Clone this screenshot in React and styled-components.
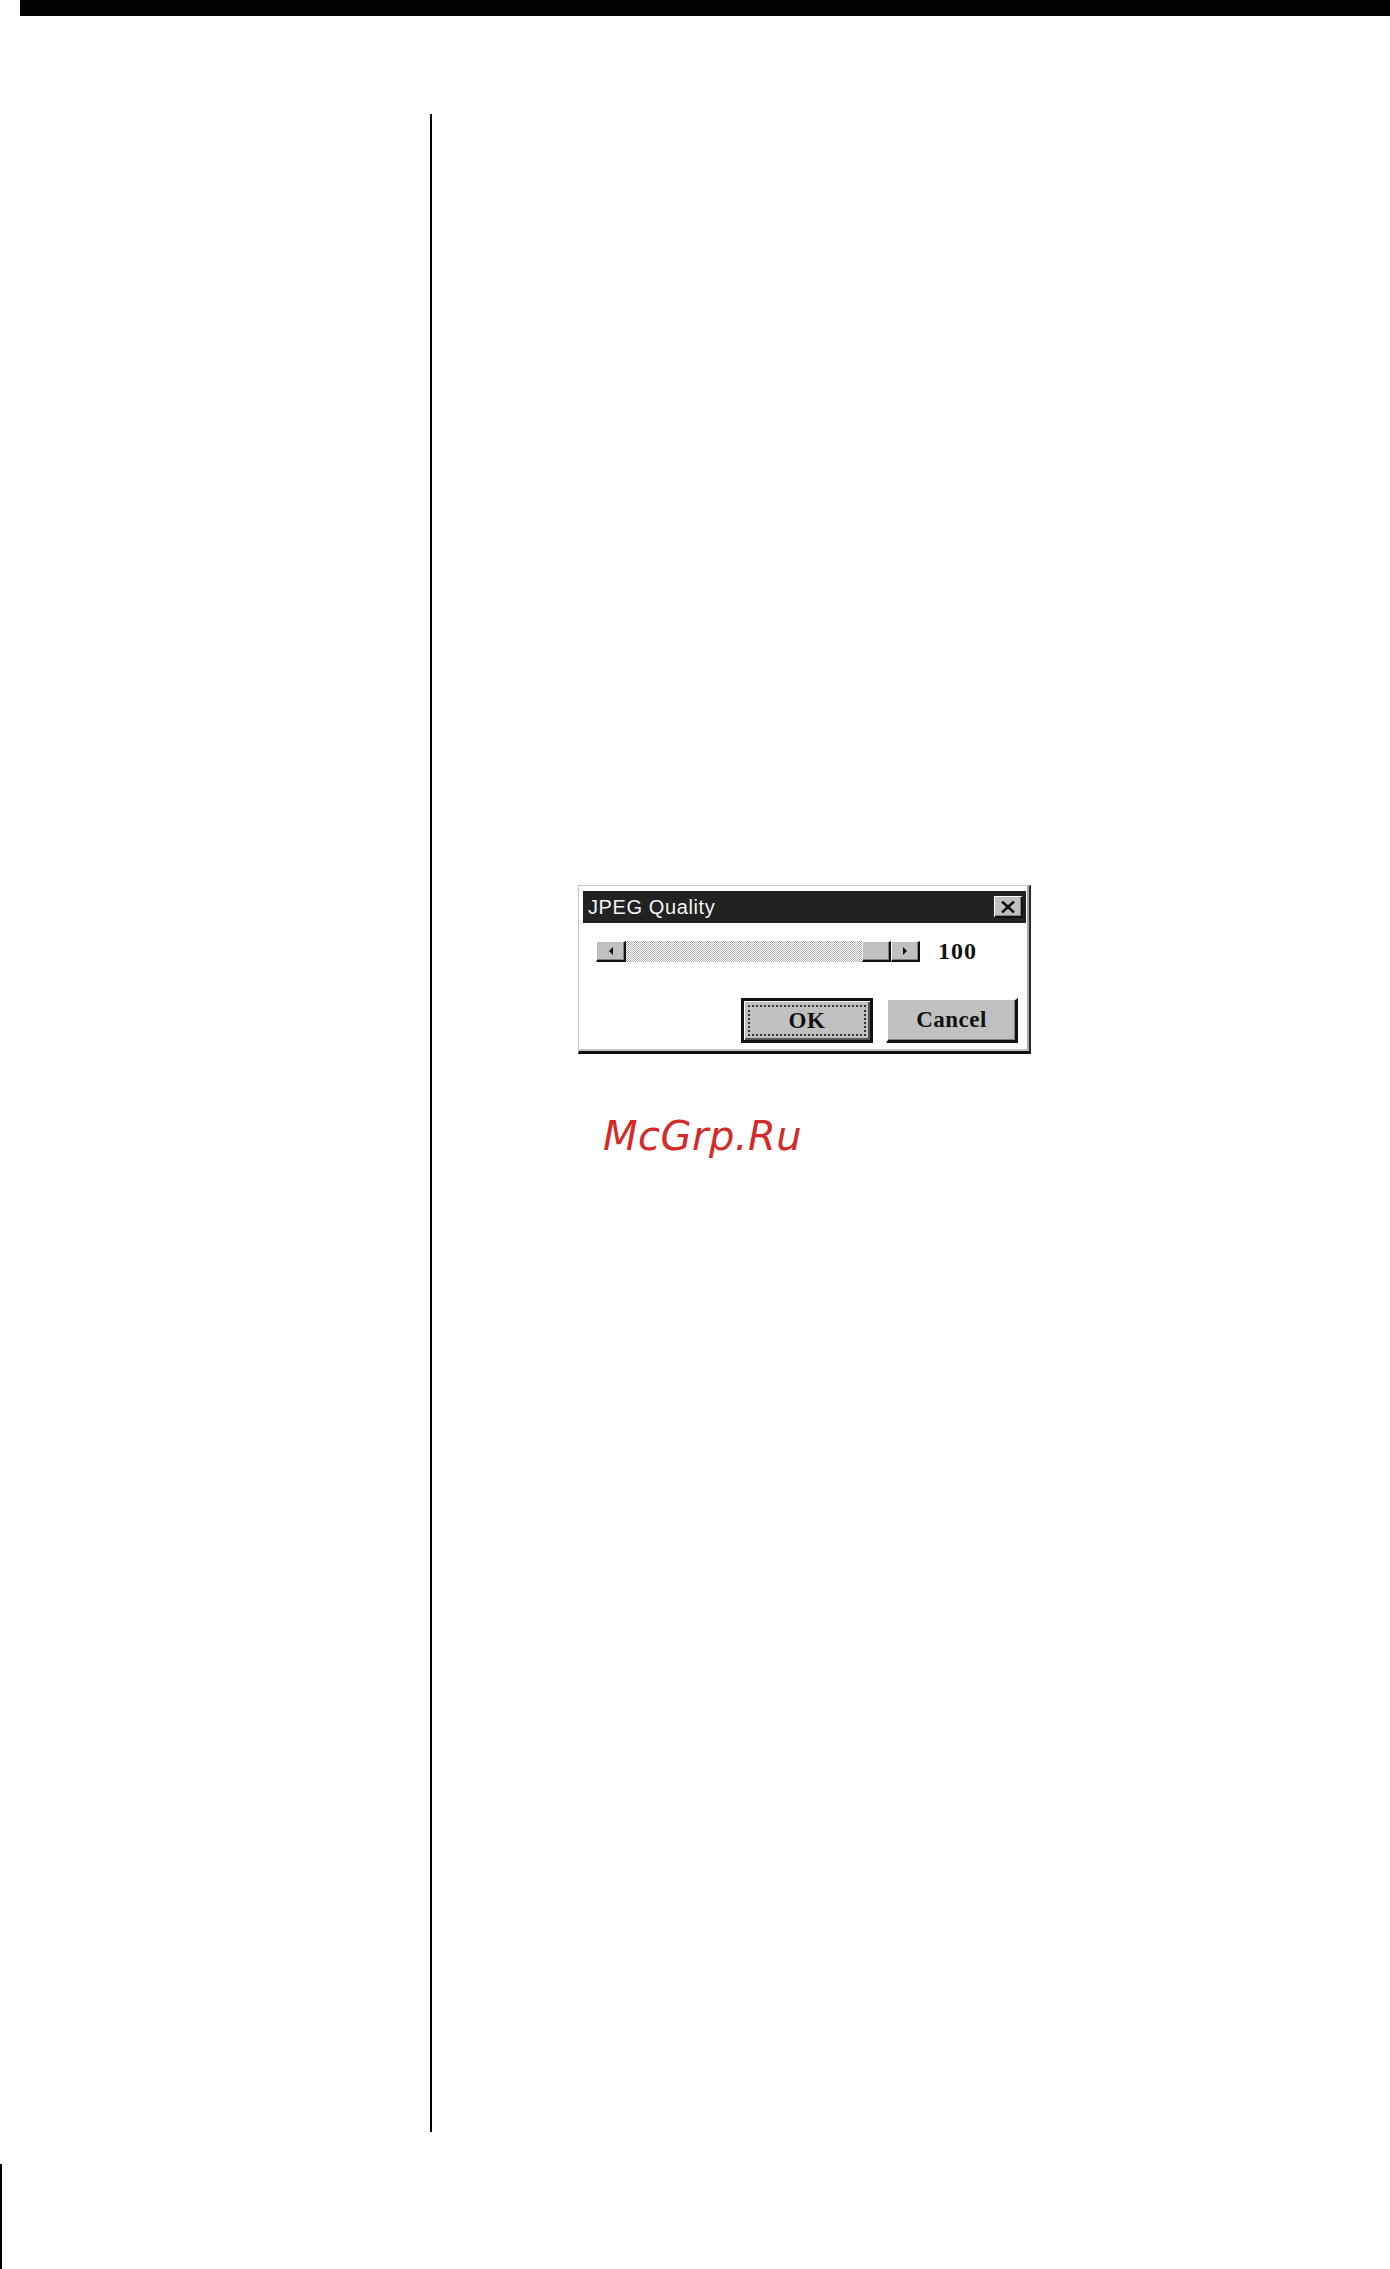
import React from "react"
import styled, { createGlobalStyle } from "styled-components"

const GlobalStyle = createGlobalStyle`
    html, body {
        margin: 0;
        padding: 0;
        background: #ffffff;
    }
    body {
        width: 1390px;
        height: 2269px;
        overflow: hidden;
        font-family: "Liberation Sans", Arial, sans-serif;
    }
`

const TopBar = styled.div`
    height: 16px;
    margin-left: 20px;
    background-color: #000;
`

const Main = styled.div`
    display: flex;
    margin-top: 98px;
`

const Sidebar = styled.div`
    width: 430px;
    height: 2018px;
    border-right: 2px solid #000;
    flex-shrink: 0;
`

const Content = styled.div`
    display: flex;
    flex-direction: column;
    align-items: flex-start;
    padding: 771px 0 0 146px;
`

const Footer = styled.div`
    margin-top: 32px;
    width: 2px;
    height: 105px;
    background-color: #000;
`

const Dialog = styled.div`
    width: 450px;
    background: #fff;
    border-top: 1px solid #c4c4c4;
    border-left: 1px solid #c4c4c4;
    border-right: 2px solid #2a2a2a;
    border-bottom: 3px solid #111;
`

const DialogInner = styled.div`
    padding: 5px 1px 2px 4px;
    border-right: 2px solid #a8a8a8;
    border-bottom: 2px solid #c0c0c0;
`

const TitleBar = styled.div`
    display: flex;
    align-items: center;
    justify-content: space-between;
    height: 32px;
    padding: 0 3px 0 5px;
    background-color: #222;
`

const Title = styled.span`
    color: #f4f4f4;
    font-family: "Liberation Sans", Arial, sans-serif;
    font-size: 20px;
    letter-spacing: 0.6px;
`

const bevel = `
    background-color: #c0c0c0;
    border-top: 1px solid #fff;
    border-left: 1px solid #fff;
    border-right: 2px solid #111;
    border-bottom: 2px solid #111;
    box-shadow: inset -1px -1px 0 #808080;
    box-sizing: border-box;
`

const CloseButton = styled.div`
    ${bevel}
    width: 29px;
    height: 22px;
    display: flex;
    align-items: center;
    justify-content: center;
`

const Body = styled.div`
    padding: 15px 8px 4px 13px;
`

const SliderRow = styled.div`
    display: flex;
    align-items: center;
    gap: 18px;
`

const ScrollBar = styled.div`
    display: flex;
    height: 21px;
`

const ArrowButton = styled.div`
    ${bevel}
    width: ${p => p.$w}px;
    height: 21px;
    display: flex;
    align-items: center;
    justify-content: center;
`

const Track = styled.div`
    width: ${p => p.$w}px;
    height: 21px;
    background-color: #fff;
    background-image: repeating-conic-gradient(#b4b4b4 0 25%, #ffffff 0 50%);
    background-size: 2px 2px;
`

const Value = styled.span`
    font-family: "Liberation Serif", "Times New Roman", serif;
    font-weight: bold;
    font-size: 24px;
    letter-spacing: 1px;
    color: #111;
`

const ButtonRow = styled.div`
    display: flex;
    justify-content: flex-end;
    gap: 13px;
    margin-top: 33px;
`

const Button = styled.div`
    width: 132px;
    height: 45px;
    box-sizing: border-box;
    display: flex;
    align-items: center;
    justify-content: center;
    font-family: "Liberation Serif", "Times New Roman", serif;
    font-weight: bold;
    font-size: 23px;
    letter-spacing: 0.5px;
    color: #111;
    background-color: #c0c0c0;
    ${p => p.$default ? `
        border: 3px solid #111;
        box-shadow: inset 1px 1px 0 #fff, inset -2px -2px 0 #555;
    ` : `
        border-top: 2px solid #fff;
        border-left: 2px solid #fff;
        border-right: 3px solid #111;
        border-bottom: 3px solid #111;
        box-shadow: inset -1px -1px 0 #808080;
    `}
`

const FocusRect = styled.div`
    flex: 1;
    align-self: stretch;
    margin: 4px;
    border: 2px dotted #333;
    display: flex;
    align-items: center;
    justify-content: center;
`

const Watermark = styled.div`
    margin: 58px 0 0 25px;
    font-family: "DejaVu Sans", Verdana, sans-serif;
    font-style: oblique;
    font-size: 40px;
    letter-spacing: 0.5px;
    color: #d42a2a;
    line-height: 48px;
`

function Arrow({ dir }) {
    return (
        <svg width="6" height="8" viewBox="0 0 6 8">
            {dir === "left"
                ? <polygon points="5,0 1,4 5,8" fill="#111" />
                : <polygon points="1,0 5,4 1,8" fill="#111" />}
        </svg>
    )
}

export default function App() {
    return (
        <>
            <GlobalStyle />
            <TopBar />
            <Main>
                <Sidebar />
                <Content>
                    <Dialog>
                        <DialogInner>
                            <TitleBar>
                                <Title>JPEG Quality</Title>
                                <CloseButton>
                                    <svg width="14" height="12" viewBox="0 0 14 12">
                                        <path d="M1 0.5 L13 11.5 M13 0.5 L1 11.5" stroke="#111" strokeWidth="2.6" />
                                    </svg>
                                </CloseButton>
                            </TitleBar>
                            <Body>
                                <SliderRow>
                                    <ScrollBar>
                                        <ArrowButton $w={30}><Arrow dir="left" /></ArrowButton>
                                        <Track $w={236} />
                                        <ArrowButton $w={29} />
                                        <ArrowButton $w={29}><Arrow dir="right" /></ArrowButton>
                                    </ScrollBar>
                                    <Value>100</Value>
                                </SliderRow>
                                <ButtonRow>
                                    <Button $default>
                                        <FocusRect>OK</FocusRect>
                                    </Button>
                                    <Button>Cancel</Button>
                                </ButtonRow>
                            </Body>
                        </DialogInner>
                    </Dialog>
                    <Watermark>McGrp.Ru</Watermark>
                </Content>
            </Main>
            <Footer />
        </>
    )
}
